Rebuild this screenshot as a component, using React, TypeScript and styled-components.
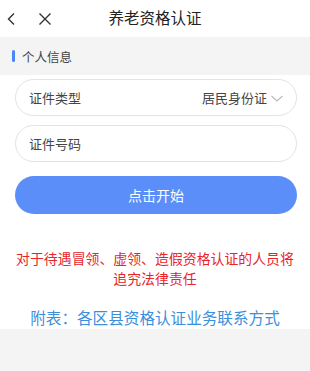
import * as React from "react";
import styled, { createGlobalStyle } from "styled-components";

const GlobalStyle = createGlobalStyle`
  html, body {
    margin: 0;
    padding: 0;
    background: #ffffff;
  }
  body {
    font-family: "Noto Sans CJK SC", "Noto Sans", sans-serif;
  }
`;

const Page = styled.div`
  width: 310px;
  height: 371px;
  display: flex;
  flex-direction: column;
  background: #ffffff;
  overflow: hidden;
`;

const Header = styled.div`
  height: 37px;
  display: grid;
  grid-template-columns: 70px 1fr 70px;
  align-items: center;
`;

const NavIcons = styled.div`
  display: flex;
  align-items: center;
  gap: 22px;
  padding-left: 6px;
  color: #333333;
`;

const Title = styled.div`
  text-align: center;
  font-size: 15.5px;
  color: #222222;
  line-height: 1;
  margin-top: -2px;
`;

const SectionBar = styled.div`
  height: 38px;
  background: #f4f4f4;
  display: flex;
  align-items: center;
  padding-left: 12px;
  gap: 7px;
  font-size: 12.5px;
  color: #444444;
`;

const Accent = styled.span`
  width: 3px;
  height: 12px;
  border-radius: 2px;
  background: #4a86f7;
`;

const Form = styled.div`
  display: flex;
  flex-direction: column;
  gap: 9px;
  padding: 4px 13px 0 15px;
`;

const Field = styled.div`
  height: 35px;
  border: 1px solid #e3e3e3;
  border-radius: 19px;
  display: flex;
  align-items: center;
  justify-content: space-between;
  padding: 0 12px 0 13px;
  font-size: 13px;
  color: #444444;
`;

const Value = styled.span`
  display: flex;
  align-items: center;
  gap: 3px;
  color: #444444;
`;

const Button = styled.div`
  margin-top: 5px;
  height: 38px;
  border-radius: 19px;
  background: #5b8ef8;
  color: #ffffff;
  display: flex;
  align-items: center;
  justify-content: center;
  font-size: 14px;
`;

const Warning = styled.div`
  margin-top: 34px;
  text-align: center;
  color: #e8232a;
  font-size: 13.9px;
  line-height: 20px;
  padding: 0 6px;
`;

const Link = styled.div`
  margin-top: 19px;
  text-align: center;
  color: #3b8fdc;
  font-size: 15.6px;
  line-height: 20px;
`;

const Footer = styled.div`
  margin-top: 2px;
  flex: 1;
  background: #f4f4f4;
`;

export default function App() {
  return (
    <Page>
      <GlobalStyle />
      <Header>
        <NavIcons>
          <svg width="10" height="14" viewBox="0 0 10 14" fill="none">
            <path d="M8 1.5 L2.5 7 L8 12.5" stroke="#333" strokeWidth="1.4" />
          </svg>
          <svg width="14" height="14" viewBox="0 0 14 14" fill="none">
            <path d="M1.5 1.5 L12.5 12.5 M12.5 1.5 L1.5 12.5" stroke="#333" strokeWidth="1.4" />
          </svg>
        </NavIcons>
        <Title>养老资格认证</Title>
        <div />
      </Header>
      <SectionBar>
        <Accent />
        个人信息
      </SectionBar>
      <Form>
        <Field>
          <span>证件类型</span>
          <Value>
            居民身份证
            <svg width="14" height="10" viewBox="0 0 14 10" fill="none">
              <path d="M1.5 3 L7 8 L12.5 3" stroke="#bbbbbb" strokeWidth="1.1" />
            </svg>
          </Value>
        </Field>
        <Field>
          <span>证件号码</span>
        </Field>
        <Button>点击开始</Button>
      </Form>
      <Warning>
        对于待遇冒领、虚领、造假资格认证的人员将
        <br />
        追究法律责任
      </Warning>
      <Link>附表：各区县资格认证业务联系方式</Link>
      <Footer />
    </Page>
  );
}
